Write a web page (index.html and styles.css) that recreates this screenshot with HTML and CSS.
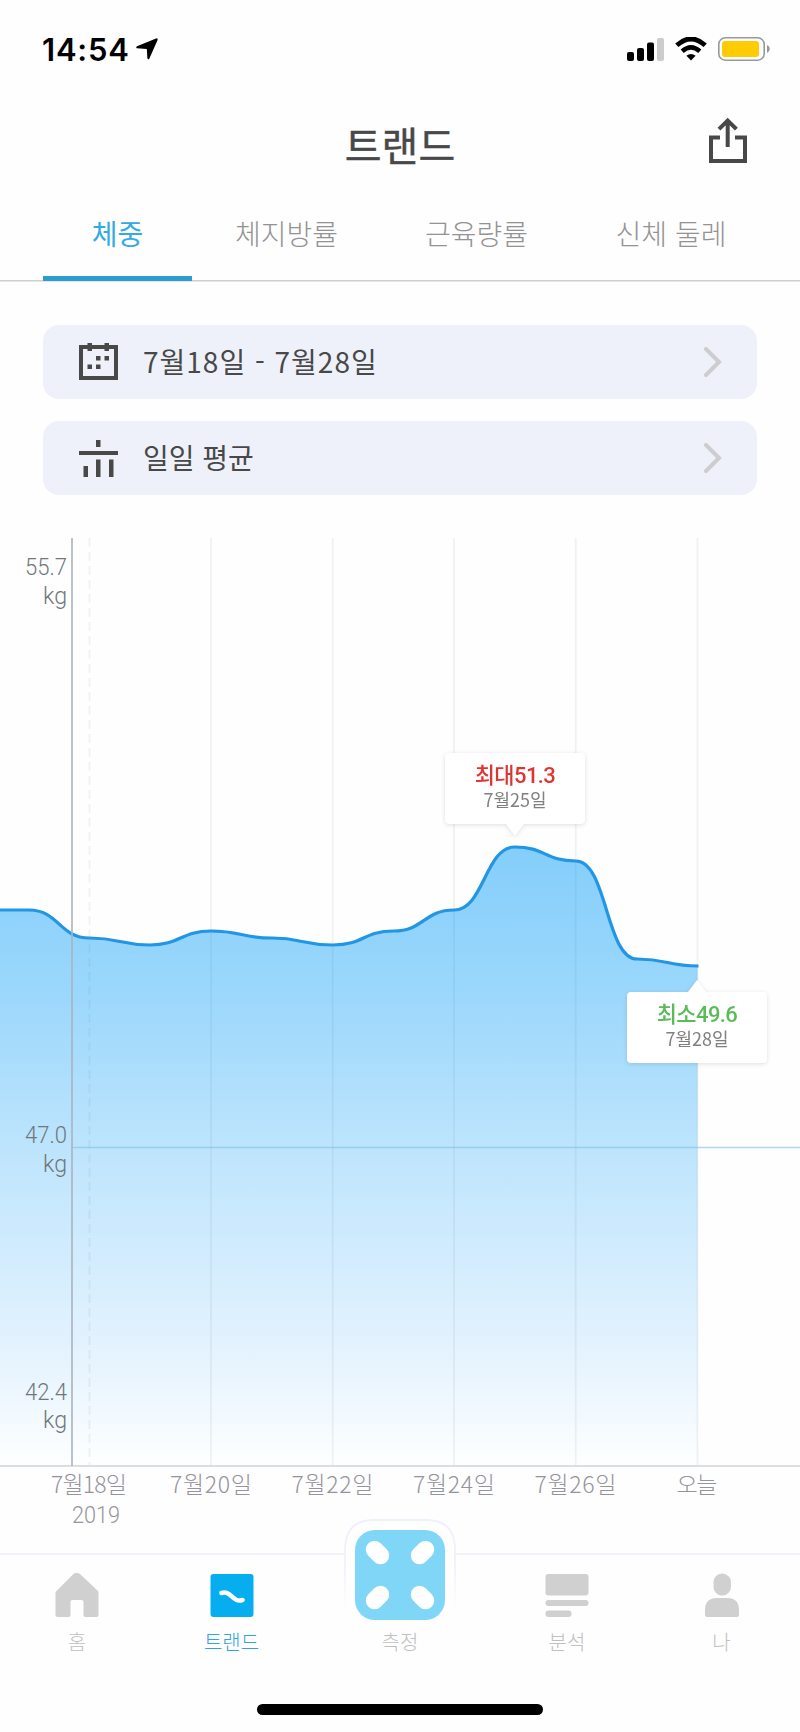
FILE: index.html
```
<!DOCTYPE html>
<html lang="ko">
<head>
    <meta charset="UTF-8">
    <meta name="viewport" content="width=device-width, initial-scale=1.0">
    <title>트랜드</title>
    <link rel="stylesheet" href="styles.css">
</head>
<body>
    <div class="status-bar">
        <span class="time">14:54</span>
        <svg class="location" width="22" height="22" viewBox="0 0 22 22"><path d="M20 .4 1 8.2Q-.5 9.5 1 10.3L10.8 11 11.4 20.300Q12.300 22.300 13.400 20.400L21.600 2Q22 0 20 .4Z"/></svg>
        <svg class="signal" width="37" height="24" viewBox="0 0 37 24">
            <rect x="0" y="15" width="7" height="9" rx="2"/>
            <rect x="10" y="11" width="7" height="13" rx="2"/>
            <rect x="20" y="5.5" width="7" height="18.5" rx="2"/>
            <rect x="30" y="1" width="7" height="23" rx="2" fill="#ccc"/>
        </svg>
        <svg class="wifi" width="32" height="24" viewBox="0 0 32 24">
            <path d="M1.8 8.2Q16-4.4 30.2 8.2" fill="none" stroke="#000" stroke-width="4.8"/>
            <path d="M7.2 14.2Q16 6.4 24.8 14.2" fill="none" stroke="#000" stroke-width="4.6"/>
            <path d="M11.4 18.8Q16 15 20.6 18.8L16 23.4Z"/>
        </svg>
        <svg class="battery" width="52" height="24" viewBox="0 0 52 24">
            <rect x=".8" y=".8" width="45.4" height="22.4" rx="6.5" fill="#fff" stroke="#999" stroke-width="1.6"/>
            <rect x="4" y="4" width="37" height="16" rx="3" fill="#ffcb05"/>
            <path d="M49 8Q51.8 9.2 51.8 12T49 16Z" fill="#999"/>
        </svg>
    </div>

    <header class="header">
        <h1>트랜드</h1>
        <svg class="share" width="40" height="47" viewBox="0 0 40 47" fill="none" stroke="#484848" stroke-width="4">
            <path d="M12 20.5H3V44H37V20.5H27"/>
            <path d="M19.7 30V4M11 12.2 19.7 3.5 28.4 12.2"/>
        </svg>
    </header>

    <nav class="tabs">
        <a class="tab active">체중</a>
        <a class="tab">체지방률</a>
        <a class="tab">근육량률</a>
        <a class="tab">신체 둘레</a>
    </nav>

    <div class="filters">
        <div class="filter">
            <svg width="39" height="38" viewBox="0 0 39 38">
                <rect x="2" y="4" width="35" height="31" fill="none" stroke="#484848" stroke-width="4"/>
                <path d="M8.5 0H13v8H8.5zM25.5 0H30v8h-4.5zM17 13h4.5v4.5H17zM25.5 13H30v4.5h-4.5zM8.5 21.5H13V26H8.5zM17 21.5h4.5V26H17z" fill="#484848"/>
            </svg>
            <span class="dates">7월18일 - 7월28일</span>
            <svg class="chevron" width="18" height="30" viewBox="0 0 18 30"><path d="M2 2 15 15 2 28"/></svg>
        </div>
        <div class="filter">
            <svg width="39" height="38" viewBox="0 0 39 38">
                <path d="M17 1h4.5v7H17zM0 12h39v4H0zM4.5 27H9v11H4.5zM17 20.5h4.5V38H17zM30 20.5h4.5V38H30z" fill="#484848"/>
            </svg>
            <span>일일 평균</span>
            <svg class="chevron" width="18" height="30" viewBox="0 0 18 30"><path d="M2 2 15 15 2 28"/></svg>
        </div>
    </div>

    <div class="chart">
        <svg width="800" height="1000" viewBox="0 538 800 1000">
            <defs>
                <linearGradient id="area" gradientUnits="userSpaceOnUse" x1="0" y1="847" x2="0" y2="1466">
                    <stop offset="0" stop-color="#84cefb"/>
                    <stop offset=".25" stop-color="#9dd8fc"/>
                    <stop offset=".5" stop-color="#bfe5fd"/>
                    <stop offset=".84" stop-color="#e7f4fe"/>
                    <stop offset="1" stop-color="#feffff"/>
                </linearGradient>
            </defs>
            <path fill="url(#area)" d="M0 910H29C59 910 59 938 89.5 938S120 945 150 945 181 931 211 931 242 938 272 938 302 945 333 945 363 931 393.5 931 424 910 454 910 485 847 515 847 545 861 576 861 606 959 637 959 667 966 697.5 966V1466H0Z"/>
            <!-- day grid -->
            <g class="grid">
                <path stroke-dasharray="9 5" d="M89.5 538V1466"/>
                <path d="M211 538V1466M332.7 538V1466M454 538V1466M575.7 538V1466M697.5 538V1466"/>
            </g>
            <path stroke="#82c4e2" stroke-opacity=".65" stroke-width="1.5" d="M72 1147.5H800"/>
            <path stroke="#cfd4da" stroke-width="1.5" d="M0 1466H800"/>
            <path class="line" d="M0 910H29C59 910 59 938 89.5 938S120 945 150 945 181 931 211 931 242 938 272 938 302 945 333 945 363 931 393.5 931 424 910 454 910 485 847 515 847 545 861 576 861 606 959 637 959 667 966 698.5 966"/>
            <path stroke="#a9b3bf" stroke-width="1.6" d="M72 538V1466"/>
            <g class="y-labels">
                <text x="25" y="575" textLength="42" lengthAdjust="spacingAndGlyphs">55.7</text>
                <text x="43" y="604" textLength="24" lengthAdjust="spacingAndGlyphs">kg</text>
                <text x="25" y="1143" textLength="42" lengthAdjust="spacingAndGlyphs">47.0</text>
                <text x="43" y="1172" textLength="24" lengthAdjust="spacingAndGlyphs">kg</text>
                <text x="25" y="1400" textLength="42" lengthAdjust="spacingAndGlyphs">42.4</text>
                <text x="43" y="1428" textLength="24" lengthAdjust="spacingAndGlyphs">kg</text>
            </g>
            <g class="x-labels">
                <text x="89" y="1493" textLength="76">7월18일</text>
                <text x="211" y="1493" textLength="82">7월20일</text>
                <text x="332.5" y="1493" textLength="82">7월22일</text>
                <text x="454" y="1493" textLength="82">7월24일</text>
                <text x="575.5" y="1493" textLength="82">7월26일</text>
                <text x="697" y="1493" textLength="41">오늘</text>
                <text class="year" x="96" y="1523" textLength="48" lengthAdjust="spacingAndGlyphs">2019</text>
            </g>
        </svg>
        <div class="tooltip max">
            <strong>최대51.3</strong>
            <span>7월25일</span>
        </div>
        <div class="tooltip min">
            <strong>최소49.6</strong>
            <span>7월28일</span>
        </div>
    </div>

    <nav class="bottom-nav">
        <a class="nav-item">
            <svg width="44" height="44" viewBox="0 0 44 44"><path d="M18.500 1Q22-1.500 25.500 1.500L43 18Q43.500 19 43.500 20V42Q43.500 44 41.500 44H30.500Q28.500 44 28.500 42V29Q28.500 27 26.500 27H17.500Q15.500 27 15.500 29V42Q15.500 44 13.500 44H2.500Q.5 44 .5 42V20Q.5 19 1.500 18Z"/></svg>
            <span>홈</span>
        </a>
        <a class="nav-item active">
            <svg width="44" height="44" viewBox="0 0 44 44"><rect x=".5" y="1" width="43" height="43" rx="3"/><path d="M11.5 20C21.500 17 22 30 32.500 27" fill="none" stroke="#fff" stroke-width="4.6" stroke-linecap="round"/></svg>
            <span>트랜드</span>
        </a>
        <a class="nav-item measure">
            <svg width="114" height="102" viewBox="0 0 114 102">
                <defs>
                    <linearGradient id="rim" x1="0" y1="0" x2="0" y2="1">
                        <stop offset=".5" stop-color="#eff1fa"/>
                        <stop offset="1" stop-color="#eff1fa" stop-opacity="0"/>
                    </linearGradient>
                </defs>
                <path d="M2 90V32Q2 2 31 2H83Q112 2 112 32V90" fill="#fefefe" stroke="url(#rim)" stroke-width="1.8"/>
                <rect x="12" y="12" width="90" height="90" rx="20" fill="#7fd6f6"/>
                <path class="feet" d="M31.5 31.5 37.5 37.5M82.5 31.5 76.5 37.5M31.5 82.5 37.5 76.5M82.5 82.5 76.5 76.5"/>
            </svg>
            <span>측정</span>
        </a>
        <a class="nav-item">
            <svg width="44" height="44" viewBox="0 0 44 44"><rect x=".5" y="1" width="43" height="21.5" rx="3"/><rect x=".5" y="27" width="43" height="6" rx="3"/><rect x=".5" y="37.5" width="26" height="6.5" rx="3"/></svg>
            <span>분석</span>
        </a>
        <a class="nav-item">
            <svg width="44" height="44" viewBox="0 0 44 44"><rect x="13.5" y=".5" width="17.5" height="22" rx="8.7"/><path d="M5 42V37Q5 25 17 25H27Q39 25 39 37V42Q39 44 37 44H7Q5 44 5 42Z"/></svg>
            <span>나</span>
        </a>
    </nav>
    <div class="home-indicator"></div>
</body>
</html>
```
FILE: styles.css
```
* {
    box-sizing: border-box;
}
body {
    margin: 0;
    width: 800px;
    height: 1732px;
    overflow: hidden;
    background: #fefefe;
    color: #484848;
    font-family: "Noto Sans CJK KR", sans-serif;
}
svg {
    display: block;
    flex: none;
}
.status-bar {
    display: flex;
    align-items: center;
    height: 98px;
    padding: 0 30px 0 42px;
}
.time {
    width: 94px;
    font-family: Inter, sans-serif;
    font-size: 31px;
    font-weight: 600;
    letter-spacing: .8px;
    color: #000;
}
.signal {
    margin-left: auto;
}
.wifi {
    margin: 0 11px;
}
.header {
    display: grid;
    grid-template-columns: 1fr auto 1fr;
    align-items: center;
    height: 92px;
    padding: 0 52px;
}
.header h1 {
    grid-column: 2;
    margin: 0;
    font-size: 40px;
    font-weight: 400;
    line-height: 56px;
    -webkit-text-stroke: .4px #484848;
}
.share {
    justify-self: end;
    margin-bottom: 8px;
}
.tabs {
    display: grid;
    grid-template-columns: 149px 189px 191px 198px;
    height: 92px;
    padding: 0 0 1px 43px;
    background: linear-gradient(#cfcfcf, #cfcfcf) 0 89.5px / 100% 1.5px no-repeat;
}
.tab {
    padding-top: 23px;
    font-size: 28px;
    font-weight: 300;
    line-height: 40px;
    text-align: center;
    color: #939393;
}
.tab.active {
    border-bottom: 5px solid #2c9bd0;
    font-weight: 400;
    color: #34aae2;
}
.filters {
    display: grid;
    gap: 22px;
    padding: 42.5px 43px 0;
}
.filter {
    display: flex;
    align-items: center;
    height: 74px;
    padding: 1px 35px 0 36px;
    border-radius: 16px;
    background: #eef1f9;
}
.filter span {
    margin: -2px auto 0 25px;
    font-size: 28px;
}
.filter .dates {
    letter-spacing: 1px;
}
.chevron {
    fill: none;
    stroke: #cdcdcf;
    stroke-width: 4;
    stroke-linecap: round;
}
.chart {
    position: relative;
    margin-top: 43.5px;
    height: 1000px;
}
.grid {
    fill: none;
    stroke: #5a7078;
    stroke-opacity: .09;
    stroke-width: 1.8;
}
.line {
    fill: none;
    stroke: #2196e5;
    stroke-width: 3.2;
}
.y-labels {
    font-family: Roboto, sans-serif;
    font-size: 24px;
    font-weight: 300;
    fill: #70777b;
}
.x-labels {
    font-size: 23px;
    font-weight: 300;
    text-anchor: middle;
    fill: #94949c;
}
.year {
    font-family: Roboto, sans-serif;
    font-size: 24px;
}
/* callouts float over the curve */
.tooltip {
    position: absolute;
    display: flex;
    flex-direction: column;
    align-items: center;
    width: 140px;
    height: 71px;
    padding-top: 10px;
    border-radius: 4px;
    background: #fff;
    filter: drop-shadow(0 1px 2px rgba(0, 0, 0, .12));
    white-space: nowrap;
}
.tooltip::after {
    content: "";
    position: absolute;
    left: 61px;
    border: 9px solid transparent;
}
.tooltip strong {
    font-family: Roboto, "Noto Sans CJK KR", sans-serif;
    font-size: 22px;
    font-weight: 500;
    letter-spacing: -.6px;
    line-height: 25px;
}
.tooltip span {
    font-size: 18px;
    line-height: 22px;
    color: #808080;
}
.max {
    left: 445px;
    top: 215px;
}
.max::after {
    top: 71px;
    border-top: 12px solid #fff;
    border-bottom: 0;
}
.max strong {
    color: #e03430;
}
.min {
    left: 627px;
    top: 454px;
}
.min::after {
    bottom: 71px;
    border-bottom: 12px solid #fff;
    border-top: 0;
}
.min strong {
    color: #5abb58;
}
.bottom-nav {
    display: grid;
    grid-template-columns: 154px 155px 182px 152px 157px;
    height: 144px;
    margin-top: 15px;
    border-top: 2px solid #f1f3f8;
}
.nav-item {
    display: flex;
    flex-direction: column;
    align-items: center;
    padding-top: 18px;
    font-size: 20px;
    font-weight: 300;
    color: #c0c0c0;
    fill: #d0d0d0;
}
.nav-item span {
    margin-top: 10px;
    line-height: 30px;
}
.nav-item.active {
    color: #30a2e6;
    fill: #06aef0;
}
.measure {
    padding-top: 0;
}
.measure svg {
    margin-top: -37px;
}
.measure span {
    margin-top: 7px;
}
.feet {
    stroke: #fff;
    stroke-width: 17.5;
    stroke-linecap: round;
}
.home-indicator {
    width: 286px;
    height: 11px;
    margin: 7px auto 0;
    border-radius: 6px;
    background: #000;
}
```
